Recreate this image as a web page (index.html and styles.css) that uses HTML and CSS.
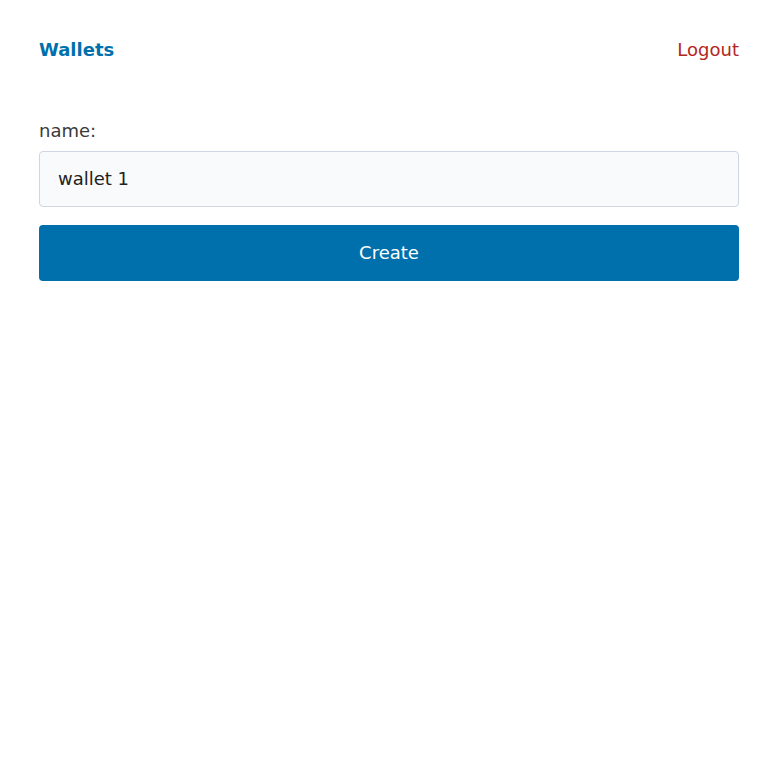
FILE: index.html
```html
<!DOCTYPE html>
<html>
<head>
<meta charset="utf-8">
<link rel="stylesheet" href="styles.css">
</head>
<body>
<div class="page">
  <header class="header">
    <a class="brand" href="#">Wallets</a>
    <a class="logout" href="#">Logout</a>
  </header>
  <form class="form">
    <label class="label" for="name">name:</label>
    <input class="input" id="name" type="text" value="wallet 1">
    <button class="button" type="button">Create</button>
  </form>
</div>
</body>
</html>
```
FILE: styles.css
```css
html, body {
  margin: 0;
  padding: 0;
  background: #fff;
}
body {
  font-family: "DejaVu Sans", sans-serif;
  font-size: 18px;
  line-height: 21px;
  color: #333;
}
.page {
  padding: 39px;
}
.header {
  display: flex;
  justify-content: space-between;
  align-items: center;
}
.brand {
  color: #0070ad;
  font-weight: bold;
  text-decoration: none;
}
.logout {
  color: #b5261e;
  text-decoration: none;
}
.form {
  display: flex;
  flex-direction: column;
  margin-top: 60px;
}
.label {
  color: #3a3a3a;
  margin-bottom: 10px;
}
.input {
  box-sizing: border-box;
  height: 56px;
  padding: 0 18px 2px;
  border: 1px solid #cfd5e2;
  border-radius: 4px;
  background: #f9fafb;
  font-family: "DejaVu Sans", sans-serif;
  font-size: 18px;
  color: #222;
  outline: none;
}
.button {
  box-sizing: border-box;
  height: 56px;
  margin-top: 18px;
  padding: 0 0 2px;
  border: none;
  border-radius: 4px;
  background: #0070ad;
  color: #fff;
  font-family: "DejaVu Sans", sans-serif;
  font-size: 18px;
  cursor: pointer;
}
```
